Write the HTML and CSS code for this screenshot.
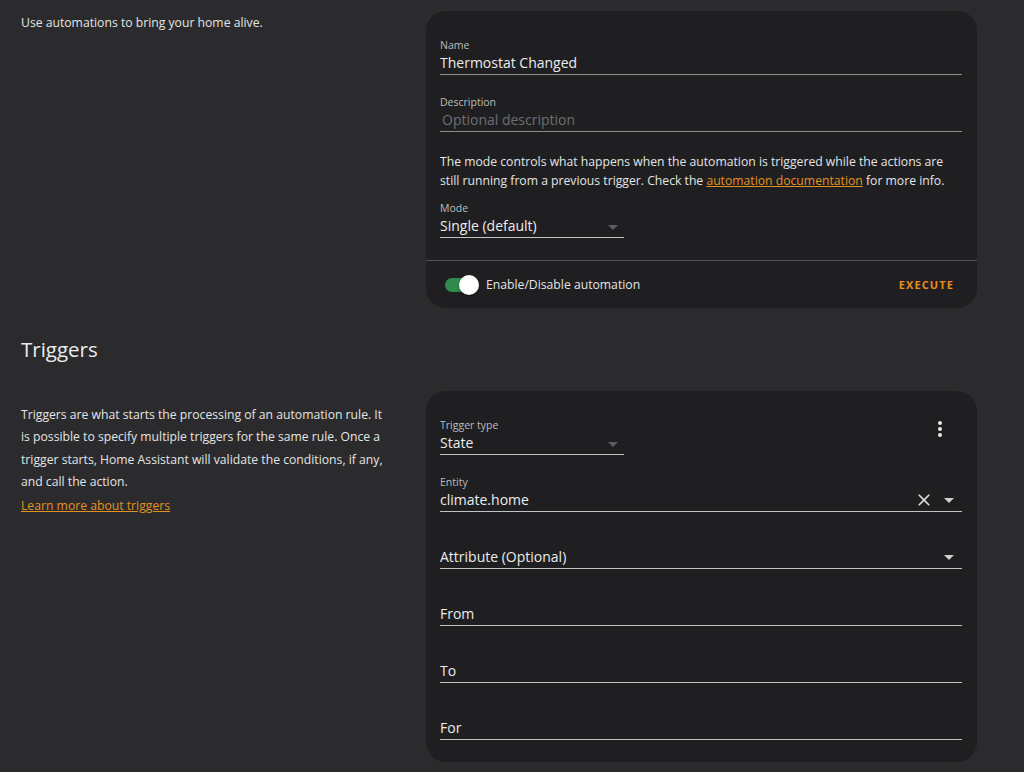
FILE: index.html
```html
<!DOCTYPE html>
<html lang="en">
<head>
<meta charset="utf-8">
<title>Automation editor</title>
<link rel="stylesheet" href="styles.css">
</head>
<body>
<main class="page">
  <section class="row">
    <div class="intro">
      <p class="intro-text">Use automations to bring your home alive.</p>
    </div>
    <div class="card">
      <div class="card-body">
        <div class="field full dim-line">
          <span class="label">Name</span>
          <span class="value">Thermostat Changed</span>
        </div>
        <div class="field full dim-line gap">
          <span class="label">Description</span>
          <span class="value placeholder">Optional description</span>
        </div>
        <p class="mode-text">The mode controls what happens when the automation is triggered while the actions are still running from a previous trigger. Check the <a href="#" class="link">automation documentation</a> for more info.</p>
        <div class="field select narrow">
          <span class="label">Mode</span>
          <span class="value">Single (default)<span class="arrow dim"></span></span>
        </div>
      </div>
      <div class="card-actions">
        <div class="toggle-wrap">
          <span class="toggle"><span class="knob"></span></span>
          <span class="toggle-label">Enable/Disable automation</span>
        </div>
        <button class="execute" type="button">EXECUTE</button>
      </div>
    </div>
  </section>

  <h2 class="section-title">Triggers</h2>

  <section class="row">
    <div class="intro">
      <p class="desc">Triggers are what starts the processing of an automation rule. It is possible to specify multiple triggers for the same rule. Once a trigger starts, Home Assistant will validate the conditions, if any, and call the action.</p>
      <a href="#" class="link learn">Learn more about triggers</a>
    </div>
    <div class="card trigger-card">
      <div class="card-body">
        <div class="trigger-head">
          <div class="field select narrow">
            <span class="label">Trigger type</span>
            <span class="value">State<span class="arrow dim"></span></span>
          </div>
          <button class="menu" type="button" aria-label="menu">
            <svg width="24" height="24" viewBox="0 0 24 24"><path fill="#e8e8e8" d="M12 16a2 2 0 1 1 0 4 2 2 0 0 1 0-4m0-6a2 2 0 1 1 0 4 2 2 0 0 1 0-4m0-6a2 2 0 1 1 0 4 2 2 0 0 1 0-4z"/></svg>
          </button>
        </div>
        <div class="field full gap">
          <span class="label">Entity</span>
          <span class="value">climate.home
            <span class="icons">
              <svg class="clear" width="20" height="20" viewBox="0 0 24 24"><path fill="#d8d8d8" d="M19 6.41 17.59 5 12 10.59 6.41 5 5 6.41 10.59 12 5 17.59 6.41 19 12 13.41 17.59 19 19 17.59 13.41 12z"/></svg>
              <span class="arrow"></span>
            </span>
          </span>
        </div>
        <div class="field full gap nolabel">
          <span class="value">Attribute (Optional)<span class="icons"><span class="arrow"></span></span></span>
        </div>
        <div class="field full gap nolabel">
          <span class="value">From</span>
        </div>
        <div class="field full gap nolabel">
          <span class="value">To</span>
        </div>
        <div class="field full gap nolabel">
          <span class="value">For</span>
        </div>
      </div>
    </div>
  </section>
</main>
</body>
</html>
```

FILE: styles.css
```css
* { box-sizing: border-box; }

html, body {
  margin: 0;
  padding: 0;
  background: #2b2b2d;
}

body {
  font-family: "Open Sans", "Noto Sans", sans-serif;
  color: #e4e4e4;
  height: 772px;
  overflow: hidden;
}

.page {
  padding: 11px 47px 0 21px;
}

.row {
  display: grid;
  grid-template-columns: 380px 551px;
  column-gap: 25px;
  align-items: start;
}

.intro-text {
  margin: 2px 0 0;
  font-size: 12.2px;
  line-height: 20px;
  color: #e4e4e4;
}

.card {
  background: #1f1f21;
  border-radius: 20px;
}

.card-body {
  padding: 27px 15px 22px 14px;
  display: flex;
  flex-direction: column;
}

.field {
  display: flex;
  flex-direction: column;
  border-bottom: 1px solid #c2c2c2;
}

.field.dim-line {
  border-bottom-color: #8c8c8c;
}

.field.gap {
  margin-top: 20px;
}

.field.narrow {
  width: 184px;
}

.label {
  font-size: 10.5px;
  line-height: 14px;
  color: #bdbdbd;
  margin-bottom: 2px;
}

.nolabel {
  padding-top: 16px;
}

.value {
  position: relative;
  display: flex;
  align-items: center;
  font-size: 14px;
  line-height: 18px;
  height: 20px;
  padding-bottom: 2px;
  color: #ececec;
}

.placeholder {
  color: #6e6e70;
  padding-left: 2px;
}

.arrow {
  display: inline-block;
  width: 0;
  height: 0;
  border-left: 5px solid transparent;
  border-right: 5px solid transparent;
  border-top: 5px solid #d0d0d0;
}

.arrow.dim {
  border-top-color: #5e5e60;
  position: absolute;
  right: 6px;
  top: 8px;
}

.icons {
  margin-left: auto;
  height: 18px;
  display: flex;
  align-items: center;
  gap: 10px;
  padding-right: 8px;
}

.clear {
  display: block;
  margin: -1px 0;
}

.mode-text {
  margin: 20px 0 11px;
  font-size: 12.2px;
  line-height: 19px;
  color: #e4e4e4;
}

.link {
  color: #e3921f;
  text-decoration: underline;
}

.card-actions {
  border-top: 1px solid #545456;
  height: 48px;
  display: flex;
  align-items: center;
  justify-content: space-between;
  padding: 0 23px 0 19px;
}

.toggle-wrap {
  display: flex;
  align-items: center;
}

.toggle {
  position: relative;
  width: 32px;
  height: 14px;
  border-radius: 7px;
  background: #2f8a4c;
  margin-right: 9px;
}

.knob {
  position: absolute;
  width: 20px;
  height: 20px;
  border-radius: 50%;
  background: #ffffff;
  top: -3px;
  right: -2px;
  box-shadow: 0 1px 2px rgba(0,0,0,0.4);
}

.toggle-label {
  font-size: 12.2px;
  color: #e4e4e4;
}

.execute {
  background: none;
  border: 0;
  padding: 0;
  font-family: inherit;
  font-weight: 700;
  font-size: 11px;
  letter-spacing: 1.1px;
  color: #ea8c1e;
}

.section-title {
  margin: 27px 0 28px;
  font-size: 20.5px;
  line-height: 28px;
  font-weight: 400;
  color: #ececec;
}

.desc {
  margin: 13px 0 0;
  max-width: 368px;
  font-size: 12.2px;
  line-height: 22.3px;
  color: #e4e4e4;
}

.learn {
  display: inline-block;
  font-size: 12.2px;
  line-height: 22px;
}

.trigger-head {
  display: flex;
  justify-content: space-between;
  align-items: flex-start;
}

.menu {
  background: none;
  border: 0;
  padding: 0;
  margin: -1px 10px 0 0;
  width: 24px;
  height: 24px;
}

.menu svg {
  display: block;
  width: 24px;
  height: 24px;
}
```
